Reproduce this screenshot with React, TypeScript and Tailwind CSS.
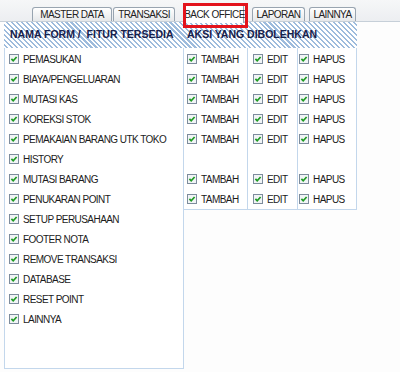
const forms = [
  'PEMASUKAN',
  'BIAYA/PENGELUARAN',
  'MUTASI KAS',
  'KOREKSI STOK',
  'PEMAKAIAN BARANG UTK TOKO',
  'HISTORY',
  'MUTASI BARANG',
  'PENUKARAN POINT',
  'SETUP PERUSAHAAN',
  'FOOTER NOTA',
  'REMOVE TRANSAKSI',
  'DATABASE',
  'RESET POINT',
  'LAINNYA',
];

// which of the form rows have actions (HISTORY has none)
const actionRows = [true, true, true, true, true, false, true, true];

function Check() {
  return (
    <svg width="10" height="10" viewBox="0 0 10 10" className="shrink-0">
      <rect x="0.5" y="0.5" width="9" height="9" fill="#f1f4f6" stroke="#7d8c9c" />
      <path d="M2.4 4.9 L4.2 6.8 L7.6 3.0" stroke="#1e9b22" strokeWidth="1.7" fill="none" />
    </svg>
  );
}

function Item({ label }: { label: string }) {
  return (
    <div className="h-[20px] flex items-center gap-[4px] whitespace-nowrap">
      <Check />
      <span>{label}</span>
    </div>
  );
}

function Tab({ label, width, className = '' }: { label: string; width: string; className?: string }) {
  return (
    <div
      className={`${width} ${className} h-[14px] flex items-center justify-center whitespace-nowrap border border-b-0 border-[#98a4b0] rounded-t-[3px] bg-gradient-to-b from-white to-[#e6e8ea] text-[#222]`}
    >
      {label}
    </div>
  );
}

export default function App() {
  return (
    <div className="w-[400px] h-[372px] bg-[#fdfdfd] text-[10px] tracking-[-0.55px] text-[#1c1c1c] font-['Liberation_Sans',sans-serif] overflow-hidden">
      {/* tab strip */}
      <div className="h-[22px] bg-gradient-to-b from-[#f6f7f8] to-[#eceef1] border-b border-[#c6cfd8] flex items-end pl-[32px]">
        <Tab label="MASTER DATA" width="w-[80px]" />
        <Tab label="TRANSAKSI" width="w-[62px]" className="ml-[1px]" />
        <div className="relative z-10 ml-[10px] w-[59px] h-[19px] -mb-[2px] flex items-center justify-center whitespace-nowrap bg-white border-x border-[#98a4b0] border-t-2 border-t-[#f0a530] text-[#222]">
          BACK OFFICE
          <div className="absolute -left-[3px] -top-[3px] w-[65px] h-[25px] border-[3px] border-[#e3141c]" />
        </div>
        <Tab label="LAPORAN" width="w-[53px]" className="ml-[8px]" />
        <Tab label="LAINNYA" width="w-[47px]" className="ml-[4px]" />
      </div>

      <div className="pl-[4px]">
        {/* hatched header */}
        <div className="w-[353px] h-[26px] flex items-center bg-[repeating-linear-gradient(45deg,#ffffff_0px,#ffffff_2px,#9dbbdc_2px,#9dbbdc_3.5px)] font-bold text-[10.5px] tracking-normal text-[#17204a]">
          <div className="w-[180px] pl-[6px] whitespace-pre">NAMA FORM /  FITUR TERSEDIA</div>
          <div className="pl-[3px]">AKSI YANG DIBOLEHKAN</div>
        </div>

        <div className="flex items-start">
          {/* forms */}
          <div className="w-[180px] h-[321px] border-x border-b border-[#c3d7ec] pt-px pl-[4px] bg-white">
            {forms.map((f) => (
              <Item key={f} label={f} />
            ))}
          </div>

          {/* actions */}
          <div className="flex border-r border-b border-[#c3d7ec] bg-white">
            <div className="w-[63px] pt-px pl-[3px]">
              {actionRows.map((on, i) => (on ? <Item key={i} label="TAMBAH" /> : <div key={i} className="h-[20px]" />))}
            </div>
            <div className="w-[50px] pt-px pl-[5px] border-l border-[#c3d7ec]">
              {actionRows.map((on, i) => (on ? <Item key={i} label="EDIT" /> : <div key={i} className="h-[20px]" />))}
            </div>
            <div className="w-[59px] pt-px pl-[1px] border-l border-[#c3d7ec]">
              {actionRows.map((on, i) => (on ? <Item key={i} label="HAPUS" /> : <div key={i} className="h-[20px]" />))}
            </div>
          </div>
        </div>
      </div>
    </div>
  );
}
